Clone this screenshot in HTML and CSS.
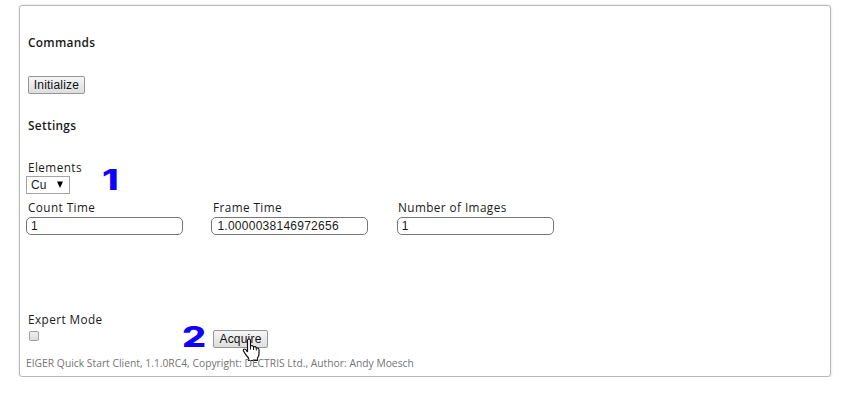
FILE: index.html
```
<!DOCTYPE html>
<html lang="en">
<head>
<meta charset="utf-8">
<title>EIGER Quick Start Client</title>
<link rel="stylesheet" href="styles.css">
</head>
<body>
<main class="panel">
  <h2 class="heading">Commands</h2>
  <button class="button initialize">Initialize</button>
  <h2 class="heading settings">Settings</h2>
  <div class="elements">
    <div class="field">
      <label class="label">Elements</label>
      <div class="select"><span>Cu</span><svg width="8" height="8" viewBox="0 0 8 8"><path d="M1 .5h6L4 7z"/></svg></div>
    </div>
    <span class="step one">1</span>
  </div>
  <div class="fields">
    <div class="field"><label class="label">Count Time</label><div class="input">1</div></div>
    <div class="field"><label class="label">Frame Time</label><div class="input number">1.0000038146972656</div></div>
    <div class="field"><label class="label">Number of Images</label><div class="input">1</div></div>
  </div>
  <div class="actions">
    <div class="expert"><label class="label">Expert Mode</label><div class="checkbox"></div></div>
    <span class="step two">2</span>
    <div class="acquire-wrap">
      <button class="button acquire">Acquire</button>
      <svg class="cursor" width="18" height="24" viewBox="0 0 18 24"><path d="M5.500 14V2.500Q5.500 1 7 1t1.500 1.500V8Q11 7 11.500 9q2-1 2.700.8Q17 9.500 17 12v4q0 2-1.500 4v2.500h-9V20Q3 16 1.500 13q-.5-2 1-2 1.500 0 3 3z" fill="#fff" stroke="#111" stroke-width="1.200"/><path d="M8.500 8v3.500M11.500 9v3M14.300 10v2.500" fill="none" stroke="#111"/></svg>
    </div>
  </div>
  <footer class="footer">EIGER Quick Start Client, 1.1.0RC4, Copyright: DECTRIS Ltd., Author: Andy Moesch</footer>
</main>
</body>
</html>
```
FILE: styles.css
```
* { box-sizing: border-box; }
body { margin: 0; padding: 5px 0 0 19px; background: #fff; font-family: "Open Sans", sans-serif; color: #1a1a1a; }
.panel { width: 812px; height: 372px; padding: 28px 6px 0; border: 1px solid #b8b8b8; border-radius: 3px; box-shadow: 0 0 3px #ddd; }
.heading { width: max-content; margin: 0 0 0 1.500px; height: 18px; font-size: 12.500px; line-height: 18px; font-weight: 600; letter-spacing: .3px; transform: scaleX(.95); transform-origin: left; }
.button { display: block; height: 18px; padding: 0; border: 1px solid #969696; border-radius: 2px; background: linear-gradient(#f6f6f6, #dedede); color: #111; font: 12px/16px "Liberation Sans", sans-serif; letter-spacing: .2px; }
.initialize { width: 57px; margin: 24px 0 0 2px; }
.settings { margin-top: 23px; }
.elements { display: flex; height: 40px; margin-top: 24px; }
.field { width: 185.400px; }
.elements .field { width: 75px; }
.label { display: block; width: max-content; height: 18px; margin-left: 1.500px; font-size: 12.500px; line-height: 18px; letter-spacing: .45px; white-space: nowrap; transform: scaleX(.94); transform-origin: left; }
.select { display: flex; align-items: center; justify-content: space-between; width: 44px; height: 18px; margin-top: -1px; padding: 0 5px 0 4px; border: 1px solid #a5a5a5; font: 12px/16px "Liberation Sans", sans-serif; }
.input { width: 157px; height: 18px; padding-left: 4px; border: 1px solid #777; border-radius: 5px; font: 12px/16px "Liberation Sans", sans-serif; }
.number { padding-left: 5px; letter-spacing: .26px; }
.fields { display: flex; }
.actions { display: flex; height: 43px; margin-top: 76px; }
.expert { width: 156px; }
.checkbox { width: 10px; height: 10px; margin: 2px 0 0 3px; border: 1px solid #a0a0a0; border-radius: 2px; background: linear-gradient(#eee, #ddd); }
.step { font: 800 28px/28px Inter, sans-serif; color: #1000ff; transform-origin: left center; }
.one { margin-top: 7px; margin-left: 1px; transform: scaleX(1.350); }
.two { width: 31px; margin-top: 12px; transform: scaleX(1.350); }
.acquire-wrap { position: relative; margin-top: 19px; }
.acquire { width: 55px; }
.cursor { position: absolute; left: 29px; top: 8px; }
.footer { width: max-content; height: 18px; font-size: 11px; line-height: 18px; color: #747474; white-space: nowrap; transform: scaleX(.937); transform-origin: left; }
```
